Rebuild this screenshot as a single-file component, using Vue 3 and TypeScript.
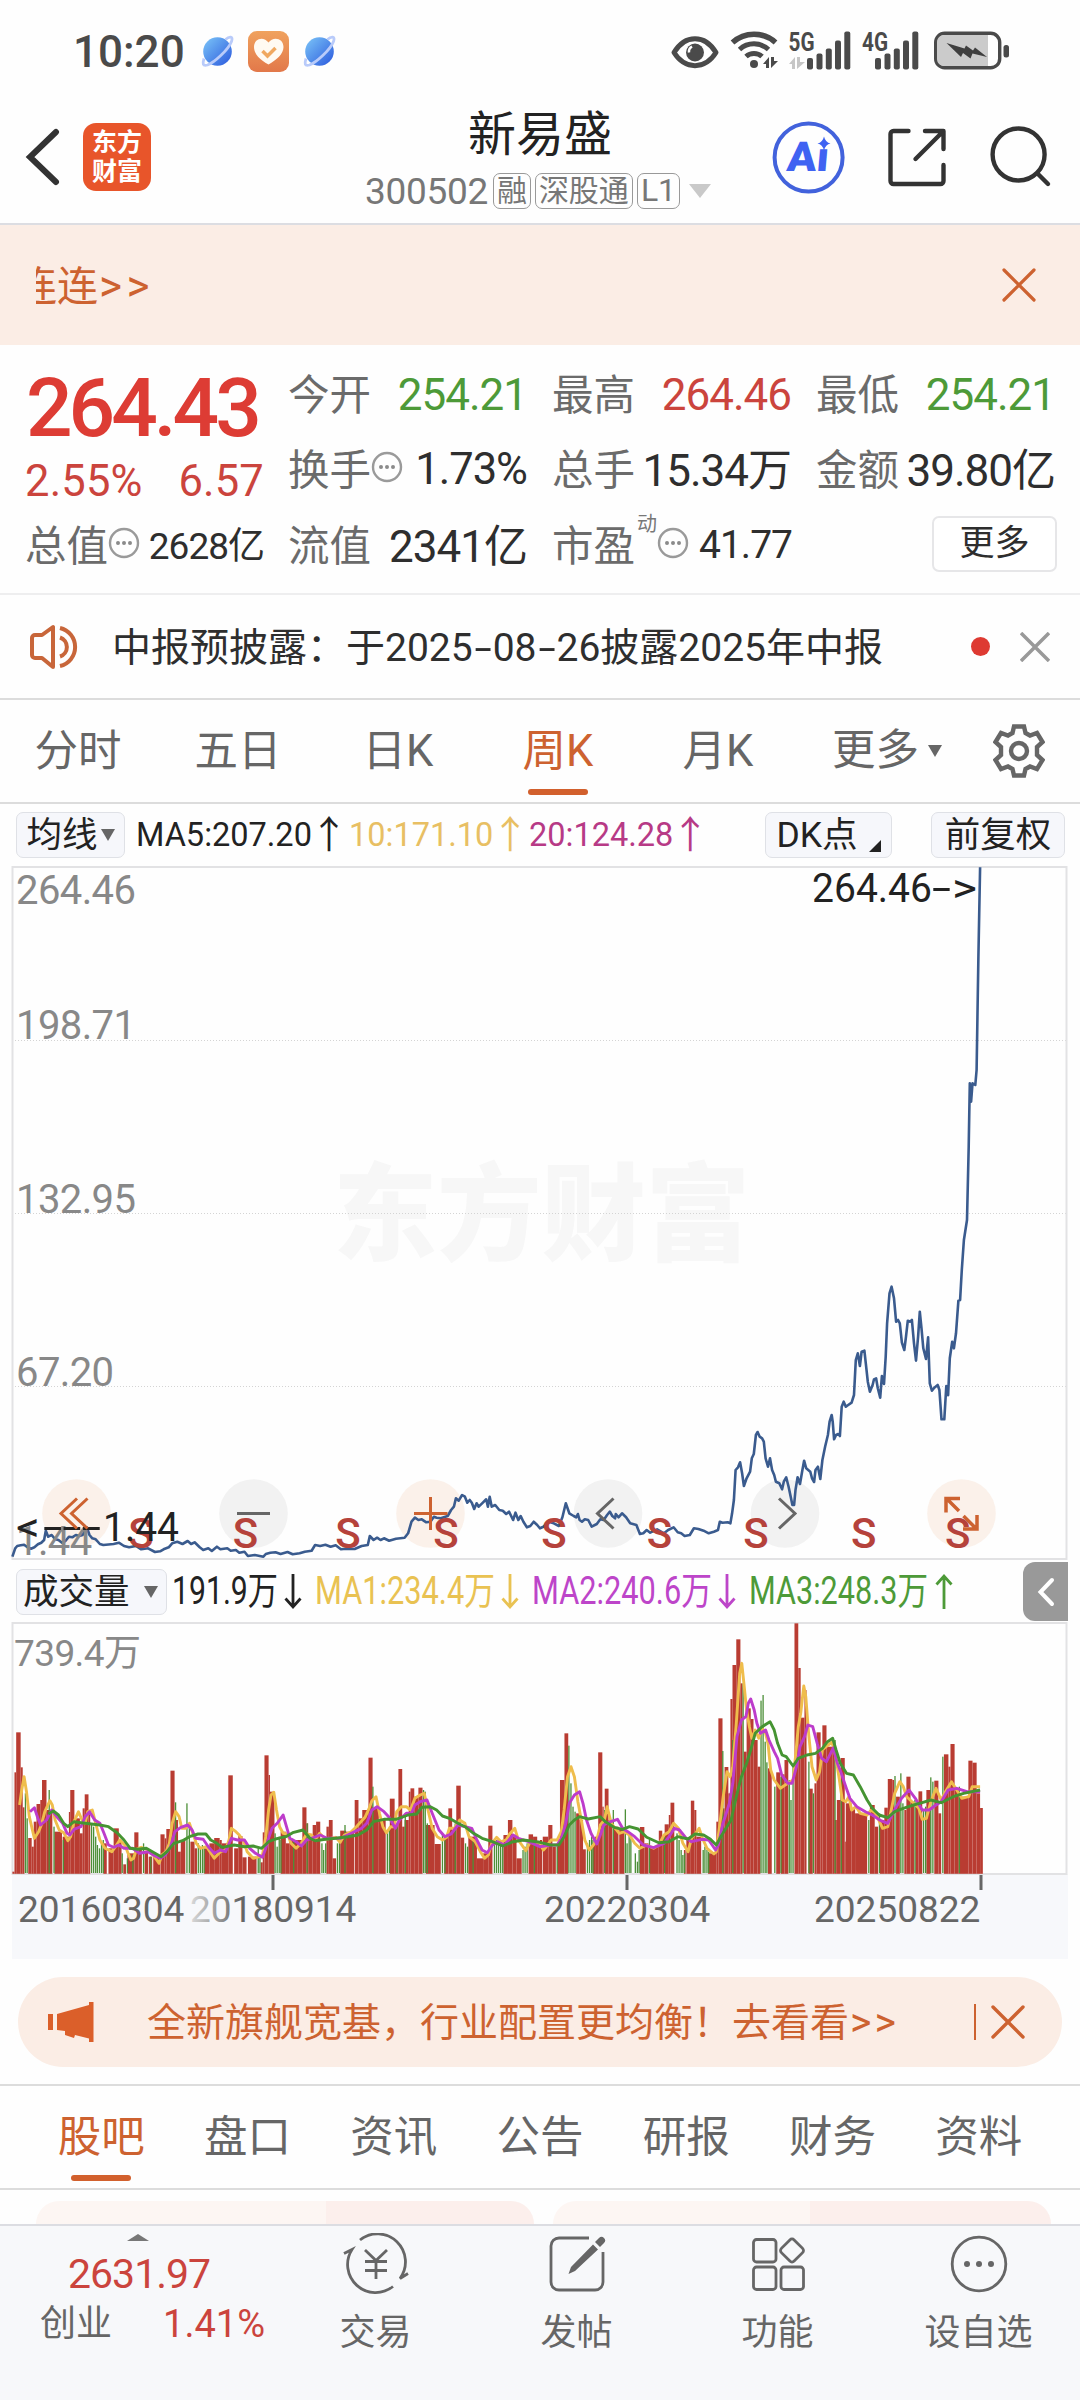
<script setup lang="ts">
type Pair = [number, number]

// Chart samples are stored on a fine grid: 2.904 units per px across, 3 units per px down.
const SX = 2.904
const SY = 3

function parse(raw: string): Pair[] {
  return raw
    .trim()
    .split(/\s+/)
    .map((p) => p.split(',').map(Number) as Pair)
}

function place(raw: string, ox: number, oy: number): string {
  return parse(raw)
    .map(([x, y]) => `${(ox + x / SX).toFixed(1)},${(oy + y / SY).toFixed(1)}`)
    .join(' ')
}

const priceLine = [
  place(
    `36,350 44,325 50,318 60,316 70,314 80,322 90,326 100,322 110,313 120,308 128,300 133,272 140,290 150,285 160,298 170,300 180,308 190,303 200,290 210,292 220,285 230,288 240,285 247,270 252,262 260,285 268,295 278,298 290,312 300,315 330,312 345,308 360,318 375,322 395,318 410,328 430,325 450,336 465,334 475,328 490,322 500,310 515,305 530,312 545,303 555,312 565,307 580,322 590,330 605,325 615,333 630,320 640,328 660,325 670,332 685,330 695,338 710,335 720,348 740,345 765,350 772,342 785,338 800,337 815,342 835,336 850,343 870,340 885,335 905,332 915,315 930,318 945,314 960,320 975,316 990,328 1005,326 1030,327 1050,318 1068,315 1074,288 1085,300 1095,293 1105,300 1115,295 1130,302 1150,296 1175,293 1185,280 1195,245 1205,233 1215,240 1225,238 1238,247 1250,245 1260,230 1268,233 1280,235 1300,228 1310,210 1318,200 1324,175 1332,182 1342,165 1350,170 1357,188 1364,180 1370,188 1377,207 1384,190 1390,200 1400,190 1412,178 1417,200 1422,170 1428,200 1438,195 1450,210 1460,212 1470,222 1478,215 1490,240 1497,218 1505,240 1512,228 1520,245 1530,262 1540,258 1550,245 1560,255 1568,265`,
    0,
    1440,
  ),
  place(
    `10,860 25,845 40,850 55,858 65,832 75,790 85,820 98,828 105,832 110,822 115,840 122,845 130,838 140,840 150,860 165,852 175,838 185,840 195,825 203,815 210,828 218,835 220,822 228,832 238,820 250,832 262,850 280,855 290,882 300,880 310,870 320,878 340,868 360,880 372,870 388,862 400,877 410,880 420,888 435,885 447,865 460,867 475,872 490,880 505,875 517,870 522,845 530,848 545,847 553,850 558,820 563,780 568,690 575,682 581,667 587,700 592,738 600,715 610,695 615,655 621,642 627,585 632,576 638,590 645,595 650,605 655,655 662,680 668,655 674,690 680,705 685,725 695,730 703,748 708,725 715,712 722,740 728,770 733,795 738,795 742,750 748,712 755,732 762,690 767,662 773,685 785,695 790,715 796,726 800,690 807,680 814,717 820,660 828,620 836,585 841,545 847,525 850,545 854,598 860,585 866,582 871,588 876,500 882,485 888,500 895,495 905,488 912,465 917,360 923,340 929,378 934,335 942,332 946,370 952,425 958,455 966,435 970,418 976,415 981,445 988,473 993,408 999,432 1004,350 1008,250 1015,160 1021,140 1028,175 1034,245 1040,240 1045,250 1051,308 1058,330 1063,290 1068,242 1075,245 1080,240 1086,310 1092,362 1098,290 1103,215 1108,265 1113,325 1121,357 1127,292 1132,430 1138,452 1145,443 1155,435 1160,450 1166,538 1174,538 1180,438 1185,466 1190,355 1197,305 1202,325 1208,280 1215,182 1220,180 1225,90 1231,0 1240,-60 1245,-280 1248,-470 1252,-415 1256,-470 1264,-465 1268,-510 1273,-850 1278,-1118`,
    540,
    1240,
  ),
].join(' ')

interface Bar {
  x: number
  y: number
  w: number
}

const BASE = 1873

function redBars(raw: string, ox: number, oy: number): Bar[] {
  return raw
    .trim()
    .split(/\s+/)
    .map((s) => {
      const [range, top] = s.split(':')
      const [a, b] = range.split('-').map(Number)
      return { x: ox + a / SX, y: oy + Number(top) / SY, w: (b - a) / SX }
    })
}

const reds: Bar[] = [
  ...redBars(
    `36-42:785 42-47:487 47-60:367 60-66:472 66-71:592 82-92:684 92-98:710 98-106:635 106-117:582 117-122:570 122-135:510 135-152:600 158-180:665 182-200:680 200-204:606 204-216:540 216-232:625 232-240:670 240-246:595 246-257:553 257-262:610 300-310:700 315-330:715 330-345:655 345-353:690 358-366:763 370-390:730 390-402:667 402-412:715 420-430:725 432-442:740 445-465:740 466-478:673 478-483:685 483-495:657 495-507:482 507-517:630 517-525:725 525-538:690 553-565:695 565-572:715 593-608:715 608-622:700 622-638:684 638-644:690 644-663:700 663-676:496 680-692:715 692-704:678 704-716:742 720-745:740 757-763:757 763-768:667 768-780:436 780-784:495 784-797:545 815-830:665 830-840:700 840-865:690 865-878:690 878-890:592 890-895:640 895-908:680 908-918:645 918-930:635 948-955:650 955-966:630 966-976:745 988-1005:662 1005-1028:665 1030-1041:570 1041-1052:625 1052-1070:600 1070-1082:443 1082-1100:595 1100-1120:630 1132-1146:566 1146-1157:640 1157-1168:477 1168-1175:650 1175-1187:630 1187-1192:545 1192-1203:535 1203-1215:560 1215-1227:533 1237-1262:645 1262-1280:702 1290-1302:680 1302-1313:595 1313-1325:660 1325-1338:527 1338-1348:683 1360-1385:680 1385-1403:745 1403-1418:730 1418-1430:647 1462-1475:675 1475-1488:630 1488-1500:680 1500-1515:745 1535-1548:673 1548-1560:680 1560-1568:695`,
    0,
    1610,
  ),
  ...redBars(
    `0-6:780 8-24:770 24-36:735 36-46:800 50-58:790 58-71:600 71-82:460 105-115:700 115-125:720 124-133:808 153-160:790 160-169:770 169-181:517 181-185:680 188-199:626 199-210:720 213-228:740 230-245:750 290-303:741 303-315:790 318-345:800 345-355:752 355-360:770 362-374:733 374-379:705 379-390:668 418-423:810 425-438:780 438-448:662 448-454:690 454-468:770 488-512:820 512-518:725 518-530:415 530-536:685 536-547:561 547-553:640 553-559:357 559-570:255 570-582:178 582-588:310 592-600:515 600-612:385 612-620:417 620-632:480 632-640:560 662-673:565 686-697:577 699-710:583 710-721:540 739-750:130 750-757:264 757-768:413 768-774:330 780-792:626 797-803:610 803-815:457 815-820:540 820-832:436 832-850:500 850-856:500 856-862:720 862-873:660 873-885:534 885-888:785 888-905:670 905-915:685 915-950:700 958-972:675 972-982:740 987-1000:720 1000-1010:683 1010-1023:597 1023-1028:600 1034-1045:650 1058-1064:690 1064-1076:590 1076-1086:665 1090-1099:680 1099-1110:634 1122-1134:630 1145-1157:602 1157-1165:700 1173-1186:523 1186-1192:560 1192-1204:492 1204-1216:630 1216-1244:650 1244-1256:542 1256-1268:548 1268-1278:640 1278-1286:684`,
    540,
    1580,
  ),
]

const greens: Bar[] = [
  ...parse(
    `72,550 77,625 141,540 155,650 182,690 264,640 270,650 276,680 281,705 287,715 293,700 298,690 353,730 368,745 384,735 415,700 436,740 508,577 541,580 548,650 574,700 580,715 586,705 591,715 748,715 753,740 797,670 803,710 809,680 814,690 851,690 890,640 933,700 938,720 944,700 978,700 984,690 1000,645 1081,530 1123,670 1129,650 1151,650 1175,610 1228,540 1233,545 1239,640 1283,670 1290,690 1320,640 1350,700 1356,710 1372,690 1434,700 1440,690 1446,700 1452,690 1458,705 1517,720 1523,710 1529,700 1550,690`,
  ).map(([x, y]) => ({ x: x / SX, y: 1610 + y / SY, w: 1 })),
  ...parse(
    `48,800 82,497 88,610 94,680 100,695 136,790 142,780 148,770 152,780 186,690 211,690 246,688 251,790 257,765 262,775 275,820 281,845 286,810 316,780 360,770 396,760 402,780 408,810 413,825 418,820 472,810 477,800 483,810 488,815 529,513 558,480 588,310 640,362 646,345 652,485 657,547 680,620 698,590 722,600 727,660 733,560 779,545 792,640 855,480 873,600 953,720 984,700 1029,588 1046,580 1052,670 1087,660 1112,690 1118,680 1133,592 1139,605 1168,530 1216,620`,
  ).map(([x, y]) => ({ x: 540 + x / SX, y: 1580 + y / SY, w: 1 })),
]

const maLines = [
  {
    color: '#efbd4c',
    points:
      place(
        `57,585 63,540 70,500 77,545 85,620 100,685 112,665 120,645 130,605 145,572 152,585 160,630 172,660 185,668 197,692 205,680 215,635 228,605 238,630 247,640 255,605 268,600 278,640 290,690 305,715 325,725 335,710 348,690 362,705 380,750 388,745 396,718 410,712 430,720 445,735 462,760 470,735 482,725 492,700 500,640 510,605 520,620 528,655 540,655 550,640 560,670 570,700 582,715 600,710 622,745 640,725 655,720 665,690 672,655 685,665 695,675 708,695 718,725 735,745 748,742 762,735 772,680 780,600 787,555 795,547 803,600 812,650 822,670 835,672 845,700 860,715 875,700 890,672 905,675 915,690 928,670 945,688 975,682 988,697 1000,675 1020,665 1035,650 1060,622 1072,595 1080,572 1092,560 1102,610 1112,650 1122,668 1135,650 1145,650 1152,605 1165,590 1180,590 1192,600 1205,565 1220,555 1232,550 1243,600 1255,655 1270,680 1285,690 1297,682 1305,655 1320,655 1335,630 1350,640 1362,680 1380,695 1395,725 1407,745 1418,735 1428,700 1442,682 1455,695 1470,690 1480,672 1495,655 1505,690 1527,722 1540,695 1568,700`,
        0,
        1610,
      ) +
      ' ' +
      place(
        `10,810 18,800 32,780 50,780 62,755 70,690 80,590 90,560 100,590 110,665 120,720 130,780 143,810 155,795 165,780 175,735 187,720 195,680 207,730 230,760 245,755 260,765 275,790 290,805 310,795 330,805 345,795 360,765 375,755 388,730 402,745 415,790 430,815 440,775 452,760 462,745 472,775 485,805 505,822 512,815 520,750 532,650 543,575 552,590 560,560 570,430 580,280 586,250 592,310 600,390 608,440 615,475 625,450 635,475 645,445 655,460 662,490 670,570 680,600 698,625 712,615 735,600 742,530 750,440 757,400 766,318 772,350 780,460 790,560 802,600 812,575 820,510 830,500 848,487 858,525 868,590 878,660 888,665 897,650 905,690 918,680 930,700 950,705 962,690 975,700 995,745 1010,740 1020,690 1030,640 1045,605 1055,620 1065,650 1085,670 1100,685 1110,718 1122,715 1135,665 1150,625 1165,660 1175,640 1195,605 1207,625 1225,655 1245,650 1255,620 1278,620`,
        540,
        1580,
      ),
  },
  {
    color: '#bd3ccb',
    points:
      place(
        `87,605 100,593 110,625 118,645 135,630 150,600 165,620 182,640 195,670 203,675 215,658 235,650 247,620 260,605 275,630 290,640 302,670 315,705 330,712 345,705 360,715 385,715 405,730 430,725 450,738 465,745 480,735 495,710 508,665 525,652 545,645 558,660 568,685 590,688 605,710 622,730 640,720 655,725 672,685 690,690 710,690 725,715 742,730 762,742 770,720 780,685 790,655 805,640 822,615 832,650 842,685 860,695 875,708 890,690 905,685 930,675 950,685 990,685 1020,670 1050,655 1065,640 1080,600 1095,590 1115,605 1130,622 1148,655 1160,630 1180,610 1195,610 1205,585 1220,575 1240,570 1255,610 1275,660 1292,680 1310,672 1330,645 1350,650 1370,655 1385,690 1400,720 1415,728 1430,705 1445,695 1465,705 1490,675 1505,685 1535,695 1568,710`,
        0,
        1610,
      ) +
      ' ' +
      place(
        `30,795 50,795 62,775 75,730 85,670 100,645 115,635 125,670 135,720 148,760 165,792 175,765 185,735 205,725 225,718 240,745 255,755 275,770 300,795 330,803 360,790 378,765 390,745 405,750 425,775 440,785 470,778 490,780 510,810 518,795 530,735 550,670 560,610 572,470 585,420 598,410 605,370 612,357 622,390 630,430 640,460 655,450 665,480 680,515 690,535 702,585 720,610 732,610 745,560 755,500 768,470 778,435 792,440 805,490 818,535 832,545 852,503 862,545 875,580 888,620 900,655 920,680 945,695 965,705 990,722 1010,730 1022,705 1035,680 1050,655 1072,630 1090,655 1110,690 1130,690 1150,675 1165,665 1185,630 1210,625 1240,635 1278,635`,
        540,
        1580,
      ),
  },
  {
    color: '#459432',
    points:
      place(
        `140,612 155,603 170,615 185,640 197,650 215,635 235,638 265,642 290,645 315,650 340,668 360,690 378,715 400,718 425,715 450,730 468,740 485,725 505,700 530,692 550,680 575,672 598,672 612,690 630,700 645,712 680,705 710,710 735,708 760,715 780,695 800,687 830,680 850,668 880,660 900,685 915,692 945,688 975,685 1010,680 1040,675 1065,660 1085,635 1115,628 1150,628 1185,615 1210,612 1225,592 1250,590 1268,600 1285,618 1305,625 1330,640 1350,650 1375,670 1400,685 1430,695 1460,708 1490,695 1520,690 1568,697`,
        0,
        1610,
      ) +
      ' ' +
      place(
        `30,795 55,795 70,770 85,735 100,720 115,710 140,717 175,710 190,725 215,742 240,748 260,740 285,747 310,772 345,788 375,785 400,770 430,777 450,762 475,765 495,778 512,795 525,770 540,745 555,720 570,650 585,590 600,550 612,510 625,460 645,440 668,425 680,450 690,490 703,525 715,530 735,558 750,535 775,525 800,520 820,505 835,485 850,475 860,510 872,550 890,580 910,585 930,620 950,660 965,685 985,705 1010,713 1030,695 1055,685 1085,675 1110,668 1135,660 1165,668 1200,650 1230,640 1278,630`,
        540,
        1580,
      ),
  },
]

const gridLines = [1040.5, 1213.5, 1386.5]
const yLabels = [
  { v: '264.46', y: 904 },
  { v: '198.71', y: 1039 },
  { v: '132.95', y: 1213 },
  { v: '67.20', y: 1386 },
  { v: '1.44', y: 1555 },
]
const sMarks = [141, 245.5, 348, 446, 554, 659.5, 756, 863.7, 957.7]
const periods = ['分时', '五日', '日K', '周K', '月K']
const sections = ['股吧', '盘口', '资讯', '公告', '研报', '财务', '资料']
const volStats = [
  { text: '191.9万', x: 172, w: 106, arrow: 293, up: false, color: '#222' },
  { text: 'MA1:234.4万', x: 315, w: 180, arrow: 510, up: false, color: '#e9c252' },
  { text: 'MA2:240.6万', x: 532, w: 180, arrow: 727, up: false, color: '#bd45c9' },
  { text: 'MA3:248.3万', x: 749, w: 179, arrow: 944, up: true, color: '#4d9a38' },
]
</script>

<template>
  <div class="screen">
    <div class="status">
      <span class="clock">10:20</span>
      <svg class="st-left" width="140" height="44" viewBox="200 30 140 44">
        <defs>
          <linearGradient id="globe" x1="0" y1="0" x2="1" y2="1">
            <stop offset="0" stop-color="#7cc6f8" />
            <stop offset="1" stop-color="#2a58dd" />
          </linearGradient>
          <linearGradient id="appbg" x1="0" y1="0" x2="0" y2="1">
            <stop offset="0" stop-color="#f0a25e" />
            <stop offset="1" stop-color="#e2784a" />
          </linearGradient>
        </defs>
        <g v-for="cx in [217.5, 319.5]" :key="cx" :transform="`translate(${cx} 51.5)`">
          <circle r="14.3" fill="url(#globe)" />
          <path
            d="M8-12C12-15.500 16-15.500 14-10C11-2-3 11-10 13.500C-15 15-15 12-13.500 7"
            fill="none"
            stroke="#b9cbfa"
            stroke-width="2.800"
          />
        </g>
        <rect x="248" y="31" width="41" height="41" rx="9" fill="url(#appbg)" />
        <path
          d="M268.500 64.500C260 60 254 54 254 47c0-9 10-11 14.500-4.500C273 36 283.500 38 283.500 47c0 7-7 13-15 17.500z"
          fill="#fffaf2"
        />
        <path d="M262.500 51l5 5 8-8" fill="none" stroke="#f0a860" stroke-width="3.500" />
      </svg>
      <svg class="st-right" width="340" height="44" viewBox="671 30 340 44">
        <g fill="none" stroke="#4a4a4a">
          <path
            d="M674 52.500C685 34 705 34 716 52.500C705 70 685 70 674 52.500z"
            stroke-width="5"
            stroke-linejoin="round"
          />
          <path d="M732.500 42.500a32 32 0 0 1 43 0" stroke-width="5.500" />
          <path d="M739.500 49.500a21.500 21.500 0 0 1 29 0" stroke-width="5" />
          <path d="M746 56.500a12 12 0 0 1 16 0" stroke-width="5" />
          <rect x="935.700" y="33.300" width="64" height="34.500" rx="9" stroke-width="3.400" />
        </g>
        <g fill="#4a4a4a">
          <circle cx="695" cy="52.500" r="9" />
          <circle cx="754" cy="64" r="4" />
          <path d="M763 64l6-7v11h-3v-4zM771 57l0 11 7-7h-4v-4z" />
          <rect x="1003.500" y="45" width="5.500" height="12.500" rx="2.500" />
          <rect x="807" y="58" width="6" height="11.500" rx="2" />
          <rect x="816.500" y="53.500" width="6" height="16" rx="2" />
          <rect x="825.800" y="48.500" width="6" height="21" rx="2" />
          <rect x="835" y="40.500" width="6" height="29" rx="2" />
          <rect x="844.300" y="31.500" width="6" height="38" rx="2" />
          <rect x="875" y="58" width="6" height="11.500" rx="2" />
          <rect x="884.500" y="53.500" width="6" height="16" rx="2" />
          <rect x="893.800" y="48.500" width="6" height="21" rx="2" />
          <rect x="903" y="40.500" width="6" height="29" rx="2" />
          <rect x="912.300" y="31.500" width="6" height="38" rx="2" />
        </g>
        <path d="M789 64l6-7v12h-3v-5zM797 57v12l8-7h-5v-5z" fill="#c6c6c6" />
        <path d="M692 46.500a6 6 0 0 0-3 6" fill="none" stroke="#fff" stroke-width="2.500" />
        <path d="M944 35h44v31h-44a7 7 0 0 1-7-7v-17a7 7 0 0 1 7-7z" fill="#cbcbcb" />
        <path
          d="M946.500 43l18 5.500 1.500-3 7 5 2-3 12 9.500-14.500-3.500-2 5-7.500-5.500-2 4z"
          fill="#3f3f3f"
        />
        <text x="788.500" y="50.500" class="net" textLength="26" lengthAdjust="spacingAndGlyphs">5G</text>
        <text x="862" y="50.500" class="net" textLength="26" lengthAdjust="spacingAndGlyphs">4G</text>
      </svg>
    </div>

    <header class="head">
      <div class="head-side">
        <svg width="36" height="60" viewBox="0 0 36 60">
          <path d="M32 5L6 30l26 25" fill="none" stroke="#333" stroke-width="6" stroke-linecap="round" />
        </svg>
        <div class="logo"><span>东方</span><span>财富</span></div>
      </div>
      <div class="title">
        <h1>新易盛</h1>
        <div class="code">
          <span class="num">300502</span>
          <span class="badge">融</span>
          <span class="badge">深股通</span>
          <span class="badge l1">L1</span>
          <i class="tri"></i>
        </div>
      </div>
      <svg class="head-icons" width="290" height="80" viewBox="770 117 290 80">
        <circle cx="808.600" cy="157.500" r="34" fill="none" stroke="#4262dc" stroke-width="4" />
        <g transform="translate(786 170.500) skewX(-5)">
          <text x="0" y="0" class="ai" textLength="42" lengthAdjust="spacingAndGlyphs">Aı</text>
        </g>
        <path d="M824 136.500q1.500 6 6.500 7q-5 1-6.500 7q-1.500-6-6.500-7q5-1 6.500-7z" fill="#3f63f2" />
        <g fill="none" stroke="#333" stroke-width="4.400" stroke-linecap="round" stroke-linejoin="round">
          <path d="M908.500 131h-15a3 3 0 0 0-3 3v47a3 3 0 0 0 3 3h47a3 3 0 0 0 3-3v-16" />
          <path d="M925 131h18.500v18M942.500 132L915.500 159" />
          <circle cx="1018.600" cy="154.500" r="26" />
          <path d="M1037.500 173.500l10.500 10.500" />
        </g>
      </svg>
    </header>

    <div class="banner">
      <div class="marquee"><span>连连<b>&gt;&gt;</b></span></div>
      <svg width="34" height="34" viewBox="0 0 34 34">
        <path d="M2 2l30 30M32 2L2 32" stroke="#cd6230" stroke-width="3.200" stroke-linecap="round" />
      </svg>
    </div>

    <section class="quote">
      <div class="q-main">
        <div class="price">264.43</div>
        <div class="chg"><span>2.55%</span><span>6.57</span></div>
        <div class="cell cap">
          <span class="lbl">总值</span>
          <svg class="more-dot" width="32" height="32" viewBox="0 0 32 32">
            <circle cx="16" cy="16" r="14" /><path d="M10 16h0M16 16h0M22 16h0" />
          </svg>
          <span class="val sm">2628亿</span>
        </div>
      </div>
      <div class="q-grid">
        <div class="cell"><span class="lbl">今开</span><span class="val num green">254.21</span></div>
        <div class="cell"><span class="lbl">最高</span><span class="val num red">264.46</span></div>
        <div class="cell"><span class="lbl">最低</span><span class="val num green">254.21</span></div>
        <div class="cell">
          <span class="lbl">换手</span>
          <svg class="more-dot" width="32" height="32" viewBox="0 0 32 32">
            <circle cx="16" cy="16" r="14" /><path d="M10 16h0M16 16h0M22 16h0" />
          </svg>
          <span class="val num md">1.73%</span>
        </div>
        <div class="cell"><span class="lbl">总手</span><span class="val">15.34万</span></div>
        <div class="cell"><span class="lbl">金额</span><span class="val">39.80亿</span></div>
        <div class="cell"><span class="lbl">流值</span><span class="val">2341亿</span></div>
        <div class="cell">
          <span class="lbl">市盈</span><sup>动</sup>
          <svg class="more-dot pe" width="32" height="32" viewBox="0 0 32 32">
            <circle cx="16" cy="16" r="14" /><path d="M10 16h0M16 16h0M22 16h0" />
          </svg>
          <span class="val num pev">41.77</span>
        </div>
        <div class="cell end"><button class="more">更多</button></div>
      </div>
    </section>

    <div class="notice">
      <svg width="52" height="46" viewBox="0 0 52 46">
        <g fill="none" stroke="#c8663a" stroke-width="4" stroke-linejoin="round">
          <path d="M24 3v40L13 34H6a3 3 0 0 1-3-3V14a3 3 0 0 1 3-3h7z" />
          <path d="M31 13.500a10 10 0 0 1 0 19M31 4a19.500 19.500 0 0 1 0 38" />
        </g>
      </svg>
      <span class="n-text">中报预披露：于2025<b>-</b>08<b>-</b>26披露2025年中报</span>
      <i class="dot"></i>
      <svg class="n-close" width="30" height="30" viewBox="0 0 30 30">
        <path d="M1 1l28 28M29 1L1 29" stroke="#999" stroke-width="3.500" />
      </svg>
    </div>

    <nav class="periods">
      <span v-for="p in periods" :key="p" class="period" :class="{ on: p === '周K' }">{{ p }}</span>
      <span class="p-more">更多<i></i></span>
      <svg width="52" height="54" viewBox="-26 -27 52 54">
        <g fill="none" stroke="#666" stroke-width="4.400">
          <path
            d="M-5-24.500H5L6.500-18 11-15.500 18-18 23.500-9 18-4V4L23.500 9 18 18 11 15.500 6.500 18 5 24.500H-5L-6.500 18-11 15.500-18 18-23.500 9-18 4V-4L-23.500-9-18-18-11-15.500-6.500-18z"
          />
          <circle r="8" />
        </g>
      </svg>
    </nav>

    <div class="ma-row">
      <button class="chip avg">均线<i></i></button>
      <span class="ma m5">MA5:207.20<b>↑</b></span>
      <span class="ma m10">10:171.10<b>↑</b></span>
      <span class="ma m20">20:124.28<b>↑</b></span>
      <button class="chip dk">DK点<i></i></button>
      <button class="chip fq">前复权</button>
    </div>

    <svg class="price-chart" width="1080" height="695" viewBox="0 866 1080 695">
      <text x="333" y="1252" class="wm" textLength="417" lengthAdjust="spacingAndGlyphs">东方财富</text>
      <line
        v-for="g in gridLines"
        :key="g"
        x1="12"
        x2="1067"
        :y1="g"
        :y2="g"
        stroke="#d4d4d4"
        stroke-dasharray="1 2"
      />
      <rect x="12.500" y="867" width="1054" height="692" fill="none" stroke="#e2e2e4" stroke-width="2" />
      <g v-for="(x, i) in [76.5, 253.5, 430.5, 608, 785, 961.5]" :key="x">
        <circle :cx="x" cy="1513.500" r="34.300" :fill="[0, 2, 5].includes(i) ? '#fbf1ea' : '#f2f2f2'" />
      </g>
      <polyline :points="priceLine" fill="none" stroke="#3a5b8e" stroke-width="2.600" stroke-linejoin="round" />
      <text v-for="l in yLabels" :key="l.v" x="16" :y="l.y" class="ax">{{ l.v }}</text>
      <text v-for="x in sMarks" :key="x" :x="x" y="1547.500" class="smark">S</text>
      <text x="812" y="902" class="note" textLength="120" lengthAdjust="spacingAndGlyphs">264.46</text>
      <text x="932" y="902" class="note" textLength="19" lengthAdjust="spacingAndGlyphs">-</text>
      <text x="952" y="902" class="note" textLength="25" lengthAdjust="spacingAndGlyphs">&gt;</text>
      <text x="16" y="1541" class="note" textLength="24" lengthAdjust="spacingAndGlyphs">&lt;</text>
      <text x="43" y="1541" class="note" textLength="58" lengthAdjust="spacingAndGlyphs">---</text>
      <text x="103" y="1541" class="note" textLength="76" lengthAdjust="spacingAndGlyphs">1.44</text>
      <g fill="none" stroke="#cd6230" stroke-width="3">
        <path d="M77 1498.500L61 1513.500l16 15M87.500 1498.500l-16 15 16 15" />
        <path d="M414 1513.500h33.500M430.500 1497v33" />
        <path d="M959 1511L946 1498M946 1512.500v-14h14M963.500 1516l13 13M977 1515v14h-14" stroke-width="3.500" />
      </g>
      <g fill="none" stroke="#666" stroke-width="3">
        <path d="M237 1513.500h33" />
        <path d="M613.500 1498.500l-16 15 16 15M779 1498.500l16 15-16 15" />
      </g>
    </svg>

    <div class="vol-row">
      <button class="chip vol">成交量<i></i></button>
      <svg width="800" height="61" viewBox="170 1561 800 61">
        <g v-for="s in volStats" :key="s.text" :fill="s.color">
          <text :x="s.x" y="1604" class="vs" :textLength="s.w" lengthAdjust="spacingAndGlyphs">{{ s.text }}</text>
          <path
            :transform="`translate(${s.arrow} 1591.500)` + (s.up ? ' scale(1 -1)' : '')"
            d="M0-17.500V15.500M-7.500 7L0 15.500L7.500 7"
            fill="none"
            :stroke="s.color"
            stroke-width="2.800"
          />
        </g>
      </svg>
      <div class="drawer">
        <svg width="18" height="30" viewBox="0 0 18 30">
          <path d="M15 3L3.500 15 15 27" fill="none" stroke="#fff" stroke-width="4" stroke-linecap="round" />
        </svg>
      </div>
    </div>

    <svg class="vol-chart" width="1080" height="337" viewBox="0 1622 1080 337">
      <defs>
        <linearGradient id="fade" x1="191" x2="240" gradientUnits="userSpaceOnUse" y1="0" y2="0">
          <stop offset="0" stop-color="#d8d8d8" />
          <stop offset="1" stop-color="#666" />
        </linearGradient>
      </defs>
      <rect x="12" y="1874" width="1056" height="85" fill="#f7f8fb" />
      <rect x="12.500" y="1623" width="1054" height="251" fill="none" stroke="#e2e2e4" stroke-width="2" />
      <text x="14" y="1666" class="ax vmax">739.4万</text>
      <rect
        v-for="(b, i) in reds"
        :key="'r' + i"
        :x="b.x"
        :y="b.y"
        :width="b.w"
        :height="BASE - b.y + 0.8"
        fill="#b93c32"
      />
      <rect
        v-for="(b, i) in greens"
        :key="'g' + i"
        :x="b.x"
        :y="b.y"
        width="1.300"
        :height="BASE - b.y"
        fill="#4c8f38"
      />
      <polyline
        v-for="m in maLines"
        :key="m.color"
        :points="m.points"
        fill="none"
        :stroke="m.color"
        stroke-width="2.900"
        stroke-linejoin="round"
      />
      <path d="M273 1875v15M627 1875v15M981 1875v15" stroke="#666" stroke-width="3" />
      <text x="18" y="1922" class="date">20160304</text>
      <text x="190" y="1922" class="date" fill="url(#fade)">20180914</text>
      <text x="544" y="1922" class="date">20220304</text>
      <text x="814" y="1922" class="date">20250822</text>
    </svg>

    <div class="promo">
      <svg width="46" height="40" viewBox="0 0 46 40" fill="#db5f2a">
        <rect x="0" y="12" width="5" height="16" />
        <path d="M9 12L41 3V0h4.500v40H41v-3.500L27 33l-1 3-9-3v-4l-8-1z" />
      </svg>
      <span class="pr-text">全新旗舰宽基，行业配置更均衡！去看看<b>&gt;&gt;</b></span>
      <i></i>
      <svg class="pr-x" width="34" height="34" viewBox="0 0 34 34">
        <path d="M2 2l30 30M32 2L2 32" stroke="#cd6230" stroke-width="3.400" stroke-linecap="round" />
      </svg>
    </div>

    <nav class="sections">
      <span v-for="s in sections" :key="s" :class="{ on: s === '股吧' }">{{ s }}</span>
    </nav>

    <div class="cards"><div class="card"></div><div class="card two"></div></div>

    <footer class="bar">
      <div class="index">
        <i></i>
        <div class="iv">2631.97</div>
        <div class="ir"><span>创业</span><em>1.41%</em></div>
      </div>
      <div class="item">
        <svg width="66" height="62" viewBox="-33 -31 66 62" fill="none" stroke="#666" stroke-width="2.800">
          <path d="M-16-24A28 28 0 0 1 24 14.500l8-5M17 22.500A28 28 0 0 1-24-14.500l-8 4" />
          <path d="M-11-14L0-3.500 11-14M-11-2.500H11M-11 6.500H11M0-3.500V15" />
        </svg>
        <span>交易</span>
      </div>
      <div class="item">
        <svg width="66" height="62" viewBox="-33 -31 66 62">
          <path
            d="M12-26h-30a8 8 0 0 0-8 8v36a8 8 0 0 0 8 8h36a8 8 0 0 0 8-8v-30"
            fill="none"
            stroke="#666"
            stroke-width="2.800"
          />
          <path d="M16-19.500l5 5L-2 7-8.500 10l2.500-7zM18-22l4-4a3.300 3.300 0 0 1 5 5l-4 4z" fill="#666" />
        </svg>
        <span>发帖</span>
      </div>
      <div class="item">
        <svg width="66" height="62" viewBox="-33 -31 66 62" fill="none" stroke="#666" stroke-width="2.800">
          <rect x="-24.500" y="-24.500" width="22.500" height="22.500" rx="3" />
          <rect x="-24.500" y="3" width="22.500" height="22.500" rx="3" />
          <rect x="3" y="3" width="22.500" height="22.500" rx="3" />
          <rect x="-9" y="-9" width="18" height="18" rx="3" transform="translate(14 -13.500) rotate(45)" />
        </svg>
        <span>功能</span>
      </div>
      <div class="item">
        <svg width="66" height="62" viewBox="-33 -31 66 62">
          <circle r="26.800" fill="none" stroke="#666" stroke-width="2.800" />
          <g fill="#666"><circle cx="-12" r="3" /><circle r="3" /><circle cx="12" r="3" /></g>
        </svg>
        <span>设自选</span>
      </div>
    </footer>
  </div>
</template>

<style>
body {
  margin: 0;
}
</style>

<style scoped>
.screen {
  width: 1080px;
  height: 2400px;
  overflow: hidden;
  background: #fefefe;
  color: #2e2e2e;
  font-family: Roboto, 'Noto Sans CJK SC', sans-serif;
  display: flex;
  flex-direction: column;
}
.screen > * {
  flex: none;
  box-sizing: border-box;
}
.screen svg {
  display: block;
  flex: none;
}
button {
  font: inherit;
  color: inherit;
  margin: 0;
  padding: 0;
  box-sizing: border-box;
}
i,
em,
b {
  font-style: normal;
  font-weight: 400;
}

.status {
  height: 100px;
  display: flex;
  align-items: center;
  padding: 4px 69px 0 73px;
}
.clock {
  font-size: 44px;
  font-weight: 500;
  color: #4a4a4a;
  width: 127px;
}
.st-right {
  margin-left: auto;
  overflow: visible;
}
.net {
  font: 700 26px Roboto;
  fill: #4a4a4a;
}

.head {
  height: 125px;
  border-bottom: 2px solid #dcdde2;
  display: flex;
  justify-content: space-between;
  padding: 0 20px 0 24px;
  align-items: flex-start;
}
.head-side {
  display: flex;
  align-items: center;
  gap: 23px;
  width: 288px;
  padding-top: 23px;
}
.logo {
  width: 68px;
  height: 68px;
  border-radius: 13px;
  background: #e8552a;
  color: #fff;
  font-size: 25px;
  font-weight: 700;
  line-height: 29px;
  display: flex;
  flex-direction: column;
  align-items: center;
  justify-content: center;
}
.title {
  flex: 1;
  display: flex;
  flex-direction: column;
  align-items: center;
}
h1 {
  margin: 6px 0 0 -2px;
  font-size: 48px;
  line-height: 58px;
  font-weight: 400;
  color: #222;
}
.code {
  display: flex;
  align-items: center;
  height: 40px;
  margin-top: 7px;
  margin-left: -6px;
  color: #777;
  gap: 4px;
  white-space: nowrap;
}
.code .num {
  font-size: 37px;
  margin-right: 1px;
  letter-spacing: -0.3px;
}
.badge {
  border: 1.5px solid #999;
  border-radius: 7px;
  height: 36px;
  line-height: 33px;
  padding: 0 3px;
  font-size: 30px;
  box-sizing: border-box;
}
.badge.l1 {
  font-size: 32px;
}
.tri {
  border: 11px solid transparent;
  border-top: 14px solid #c9c9c9;
  border-bottom: 0;
  margin-left: 5px;
}
.head-icons {
  margin-top: 17px;
}
.ai {
  font: 900 41px Roboto;
  fill: #3f63f2;
}

.banner {
  height: 120px;
  background: #fbede5;
  display: flex;
  align-items: center;
  justify-content: space-between;
  padding: 0 44px 0 36px;
  color: #cd6230;
}
.marquee {
  overflow: hidden;
  font-size: 41px;
  width: 160px;
  margin-top: -4px;
}
.marquee span {
  display: block;
  margin-left: -20px;
}
.marquee b {
  font-size: 44px;
  letter-spacing: 4.5px;
  margin-left: 1px;
}

.quote {
  height: 250px;
  border-bottom: 2px solid #eeeeef;
  display: flex;
  padding: 0 25px;
}
.q-main {
  width: 263px;
}
.price {
  font-size: 82px;
  font-weight: 500;
  line-height: 96px;
  letter-spacing: -4px;
  margin: 15px 0 -1px 1px;
  color: #dd3c34;
}
.chg {
  display: flex;
  justify-content: space-between;
  font-size: 43.500px;
  line-height: 54px;
  height: 52px;
  color: #cb443d;
  width: 239px;
}
.chg span {
  letter-spacing: 0.2px;
}
.q-grid {
  display: grid;
  grid-template-columns: repeat(3, 239px);
  column-gap: 25px;
  grid-auto-rows: 75.3px;
  padding-top: 11px;
}
.cell {
  display: flex;
  align-items: center;
  white-space: nowrap;
  height: 72px;
}
.cap {
  width: 239px;
}
.lbl {
  font-size: 41.500px;
  color: #6b6b6b;
}
.val {
  margin-left: auto;
  font-size: 44px;
  letter-spacing: -1px;
}
.val.num {
  margin-top: 5px;
}
.val.sm {
  font-size: 37px;
}
.val.md {
  font-size: 43.500px;
}
.val.pev {
  font-size: 39px;
  margin-left: 10px;
}
.val.red {
  color: #cb443d;
}
.val.green {
  color: #4d9a38;
}
.more-dot circle {
  fill: none;
  stroke: #9a9a9a;
  stroke-width: 2.4;
}
.more-dot path {
  stroke: #8a8a8a;
  stroke-width: 4;
  stroke-linecap: round;
}
sup {
  font-size: 20px;
  color: #777;
  align-self: flex-start;
  line-height: 26px;
  margin: 4px 0 0 2px;
}
.more {
  width: 125px;
  height: 56px;
  border: 2px solid #e6e6e8;
  border-radius: 7px;
  background: #fff;
  font-size: 35px;
  line-height: 50px;
  margin: 3px -2px 0 auto;
}

.notice {
  height: 105px;
  border-bottom: 2px solid #dcdcdc;
  display: flex;
  align-items: center;
  padding: 0 30px 0 29px;
}
.n-text {
  font-size: 39px;
  margin: -6px 0 0 31px;
  white-space: nowrap;
}
.n-text b {
  display: inline-block;
  width: 20px;
  text-align: center;
  transform: scaleX(1.6);
}
.dot {
  width: 19px;
  height: 19px;
  border-radius: 50%;
  background: #de3a32;
  margin-left: auto;
  margin-right: 30px;
}

.periods {
  height: 104px;
  border-bottom: 2px solid #dcdcdc;
  display: flex;
  align-items: center;
  color: #666;
  font-size: 43.500px;
}
.period {
  width: 160px;
  height: 102px;
  line-height: 104px;
  text-align: center;
  position: relative;
}
.period:first-child {
  margin-left: -2px;
}
.period.on,
.sections .on {
  color: #cd6230;
}
.period.on::after,
.sections .on::after {
  content: '';
  position: absolute;
  left: 50%;
  margin-left: -30px;
  bottom: 7px;
  width: 60px;
  height: 6px;
  border-radius: 3px;
  background: #d2602d;
}
.p-more {
  display: flex;
  align-items: center;
  width: 161px;
  height: 102px;
  line-height: 100px;
  margin-left: 34px;
}
.p-more i,
.avg i,
.vol i {
  border: 7.5px solid transparent;
  border-top: 12px solid #666;
  border-bottom: 0;
  margin-left: 9px;
}

.ma-row {
  height: 62px;
  display: flex;
  align-items: center;
  padding-left: 16px;
  white-space: nowrap;
}
.chip {
  height: 46px;
  border: 1.5px solid #dfe1e6;
  border-radius: 7px;
  background: #f6f7fb;
  color: #222;
  font-size: 35.500px;
  line-height: 42px;
  display: flex;
  align-items: center;
  justify-content: center;
}
.avg {
  width: 109px;
}
.avg i {
  margin-left: 3px;
}
.ma {
  font-size: 32.500px;
  display: flex;
  align-items: center;
  height: 46px;
  line-height: 46px;
}
.ma b {
  font-size: 38px;
  width: 32px;
  margin-left: 1px;
  display: flex;
  justify-content: center;
}
.m5 {
  color: #222;
  width: 213px;
  margin-left: 11px;
}
.m10 {
  color: #e8bf63;
  width: 180px;
}
.m20 {
  color: #b73a86;
}
.dk {
  width: 127px;
  margin-left: auto;
}
.dk i {
  border-left: 12px solid transparent;
  border-bottom: 12px solid #222;
  margin: 22px 0 0 11px;
}
.fq {
  width: 134px;
  margin: 0 15px 0 39px;
}

.wm {
  font: 900 106px 'Noto Sans CJK SC', sans-serif;
  fill: #f7f7f7;
}
.ax {
  font-size: 40px;
  fill: #888;
  letter-spacing: -0.6px;
}
.vmax {
  font-size: 37px;
}
.note {
  font-size: 40px;
  fill: #222;
}
.smark {
  font-size: 42px;
  font-weight: 500;
  fill: #b5423b;
  text-anchor: middle;
}
.date {
  font-size: 37px;
  fill: #666;
}
.date[fill] {
  fill: url(#fade);
}
.vs {
  font-size: 38px;
}

.vol-row {
  height: 61px;
  display: flex;
  align-items: center;
  padding-left: 16px;
}
.vol {
  width: 151px;
  margin-right: 3px;
  justify-content: flex-start;
  padding-left: 6px;
}
.vol i {
  margin-left: 14px;
}
.drawer {
  width: 45px;
  height: 59px;
  border-radius: 12px 0 0 12px;
  background: #999;
  margin-left: 53px;
  display: flex;
  align-items: center;
  justify-content: center;
}

.promo {
  height: 90px;
  margin: 18px 18px 17px;
  border-radius: 45px;
  background: #fbede5;
  display: flex;
  align-items: center;
  color: #cd6230;
  padding-left: 30px;
}
.pr-text {
  font-size: 39px;
  margin: -7px 0 0 53px;
  width: 827px;
  white-space: nowrap;
}
.pr-text b {
  font-size: 41px;
  letter-spacing: 3px;
  margin-left: 1px;
}
.promo i {
  width: 1.5px;
  height: 36px;
  background: #cd6230;
}
.pr-x {
  margin-left: 15px;
}

.sections {
  height: 106px;
  border-top: 2px solid #dcdcdc;
  border-bottom: 2px solid #dcdcdc;
  display: flex;
  padding: 0 28px;
  font-size: 43.500px;
  line-height: 104px;
  color: #666;
  text-align: center;
}
.sections span {
  flex: 1;
  height: 102px;
  position: relative;
}
.cards {
  height: 34px;
  display: flex;
  gap: 19px;
  padding: 11px 28px 0 36px;
}
.card {
  width: 498px;
  border-radius: 26px 26px 0 0;
  background: linear-gradient(90deg, #fdf6f3 58.200%, #fcefec 58.200%);
}
.card.two {
  background: linear-gradient(90deg, #fdf6f3 51.600%, #fcefec 51.600%);
}

.bar {
  flex: 1 !important;
  border-top: 2px solid #dcdde2;
  background: #f7f8fa;
  display: flex;
}
.index {
  width: 275px;
}
.index i {
  display: block;
  width: 0;
  margin: 8px 0 0 127px;
  border: 11px solid transparent;
  border-bottom: 7px solid #777;
  border-top: 0;
}
.iv {
  font-size: 41px;
  line-height: 50px;
  margin: 8px 0 0 68px;
  letter-spacing: -1px;
  color: #cb443d;
}
.ir {
  display: flex;
  justify-content: space-between;
  align-items: center;
  font-size: 36px;
  line-height: 50px;
  padding: 0 10px 0 40px;
  color: #666;
}
.ir em {
  color: #cb443d;
  font-size: 38px;
}
.item {
  width: 201px;
  display: flex;
  flex-direction: column;
  align-items: center;
  color: #666;
  font-size: 36px;
  padding-top: 7px;
}
.item span {
  line-height: 50px;
  margin-top: 13px;
}
</style>
